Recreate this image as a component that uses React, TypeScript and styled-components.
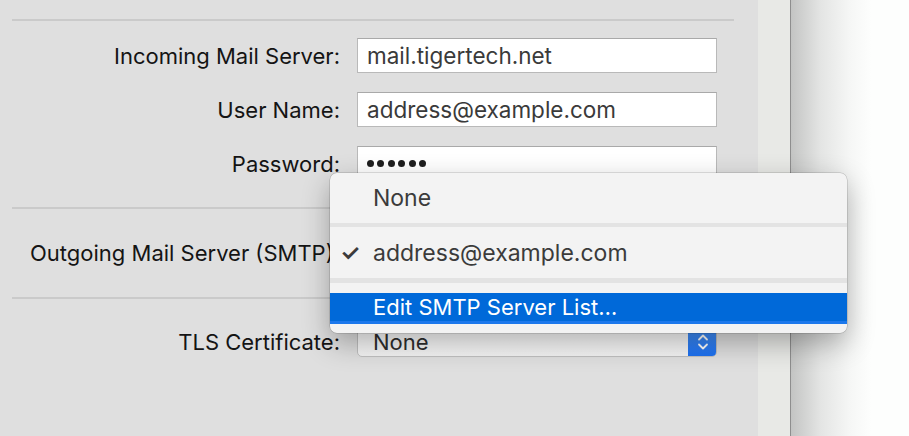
import styled, { createGlobalStyle } from 'styled-components';

const GlobalStyle = createGlobalStyle`
  html, body {
    margin: 0;
    padding: 0;
  }
  body {
    font-family: Inter, Roboto, "Liberation Sans", sans-serif;
    background: #fdfefd;
    -webkit-font-smoothing: antialiased;
  }
`;

const accounts = ['None', 'address@example.com'];

const Chevrons = () => (
  <svg width='12' height='20' viewBox='0 0 12 20' fill='none'>
    <path d='M2 7.5 L6 3.5 L10 7.5' stroke='#fff' strokeWidth='1.8' strokeLinecap='round' strokeLinejoin='round' />
    <path d='M2 12.5 L6 16.5 L10 12.5' stroke='#fff' strokeWidth='1.8' strokeLinecap='round' strokeLinejoin='round' />
  </svg>
);

const App: React.FC = () => {
  return (
    <Screen>
      <GlobalStyle />
      <Panel>
        <Divider />
        <Section $top={17} $bottom={26}>
          <Row>
            <Label>Incoming Mail Server:</Label>
            <Field>mail.tigertech.net</Field>
          </Row>
          <Row>
            <Label>User Name:</Label>
            <Field>address@example.com</Field>
          </Row>
          <Row>
            <Label>Password:</Label>
            <Field>
              <Dots>
                {Array.from({ length: 6 }).map((_, i) => (
                  <Dot key={i} />
                ))}
              </Dots>
            </Field>
          </Row>
        </Section>
        <Divider />
        <Section $top={28} $bottom={29}>
          <Row>
            <Label>Outgoing Mail Server (SMTP):</Label>
            {/* the open menu sits on top of this pop-up, so it shows no title */}
            <PopUp>
              <Stepper>
                <Chevrons />
              </Stepper>
            </PopUp>
          </Row>
        </Section>
        <Divider />
        <Section $top={27} $bottom={0}>
          <Row>
            <Label>TLS Certificate:</Label>
            <PopUp>
              <span>None</span>
              <Stepper>
                <Chevrons />
              </Stepper>
            </PopUp>
          </Row>
        </Section>
      </Panel>
      <Strip />
      <Backdrop />

      <Menu>
        <MenuItem $height={50}>
          <Check />
          {accounts[0]}
        </MenuItem>
        <MenuSeparator $height={4} />
        <MenuItem $height={51}>
          <Check>✓</Check>
          {accounts[1]}
        </MenuItem>
        <MenuSeparator $height={5} />
        <MenuGap />
        <MenuItem $height={31} $active>
          <Check />
          Edit SMTP Server List…
        </MenuItem>
      </Menu>
    </Screen>
  );
};
export default App;

const Screen = styled.div`
  position: relative;
  display: flex;
  width: 909px;
  height: 436px;
  overflow: hidden;
`;

const Panel = styled.div`
  width: 758px;
  flex-shrink: 0;
  box-sizing: border-box;
  padding: 19px 24px 0 12px;
  background: #dfdfdf;
`;

const Divider = styled.div`
  height: 2px;
  background: #cacaca;
`;

const Section = styled.div<{ $top: number; $bottom: number }>`
  display: flex;
  flex-direction: column;
  gap: 19px;
  padding-top: ${(p) => p.$top}px;
  padding-bottom: ${(p) => p.$bottom}px;
`;

const Row = styled.div`
  display: grid;
  grid-template-columns: 328px 360px;
  column-gap: 17px;
  align-items: center;
`;

const Label = styled.div`
  text-align: right;
  font-size: 22px;
  color: #141414;
  white-space: nowrap;
`;

const Field = styled.div`
  height: 35px;
  box-sizing: border-box;
  display: flex;
  align-items: center;
  padding: 0 9px;
  background: #ffffff;
  border: 1px solid #b9b9b9;
  border-top-color: #a9a9a9;
  font-size: 22.5px;
  color: #3a3a3a;
`;

const Dots = styled.span`
  display: flex;
  gap: 3.4px;
`;

const Dot = styled.span`
  width: 7px;
  height: 7px;
  border-radius: 50%;
  background: #1e1e1e;
`;

const PopUp = styled.div`
  position: relative;
  height: 31px;
  box-sizing: border-box;
  display: flex;
  align-items: center;
  padding-left: 15px;
  border: 1px solid #c0c0c0;
  border-radius: 5px;
  background: linear-gradient(#ffffff, #f4f4f4);
  font-size: 22px;
  color: #2e2e2e;
  overflow: hidden;
`;

const Stepper = styled.div`
  position: absolute;
  top: -1px;
  right: -1px;
  bottom: -1px;
  width: 29px;
  display: flex;
  align-items: center;
  justify-content: center;
  border-radius: 0 5px 5px 0;
  background: linear-gradient(#4a95f8, #1b6ff1);
`;

const Strip = styled.div`
  width: 32px;
  flex-shrink: 0;
  background: #e8e9e6;
`;

const Backdrop = styled.div`
  flex: 1;
  border-left: 1px solid #8e8e8e;
  background: linear-gradient(to right, #c3c4c3, #e4e5e4 30px, #f6f7f6 60px, #fdfefd 80px);
`;

const Menu = styled.div`
  position: absolute;
  left: 330px;
  top: 173px;
  width: 517px;
  height: 160px;
  box-sizing: border-box;
  display: flex;
  flex-direction: column;
  background: #f3f3f3;
  border-radius: 7px;
  overflow: hidden;
  box-shadow:
    0 0 0 0.5px rgba(0, 0, 0, 0.22),
    0 10px 28px rgba(0, 0, 0, 0.3);
`;

const MenuItem = styled.div<{ $height: number; $active?: boolean }>`
  height: ${(p) => p.$height}px;
  flex-shrink: 0;
  box-sizing: border-box;
  display: flex;
  align-items: center;
  font-size: ${(p) => (p.$active ? 22 : 23)}px;
  color: ${(p) => (p.$active ? '#ffffff' : '#3b3b3b')};
  background: ${(p) => (p.$active ? '#0069d9' : 'transparent')};
  border-bottom: ${(p) => (p.$active ? '3px solid #1c78ec' : 'none')};
`;

const Check = styled.span`
  width: 43px;
  padding-left: 10px;
  box-sizing: border-box;
  font-size: 23px;
  font-weight: 600;
  color: #3b3b3b;
`;

const MenuSeparator = styled.div<{ $height: number }>`
  height: ${(p) => p.$height}px;
  flex-shrink: 0;
  background: #e3e3e3;
`;

const MenuGap = styled.div`
  height: 10px;
  flex-shrink: 0;
`;
